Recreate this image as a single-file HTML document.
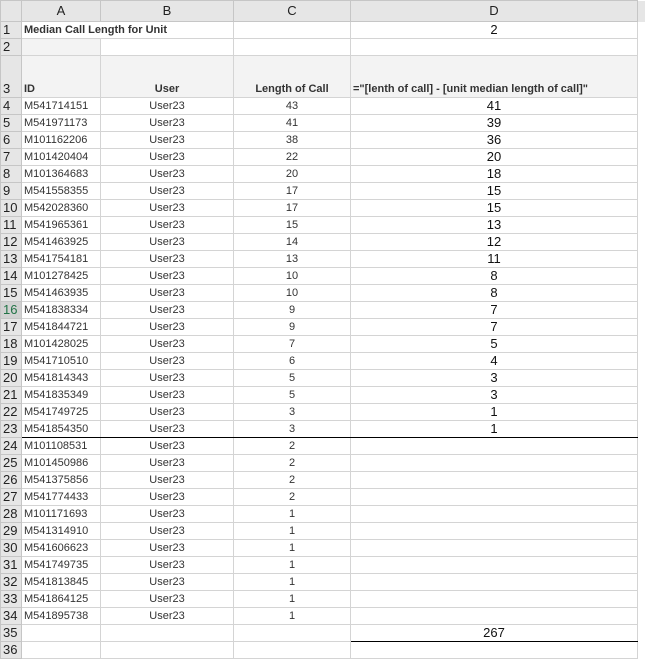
<!DOCTYPE html>
<html><head><style>
body{margin:0;background:#fff;width:645px;height:645px;overflow:hidden;font-family:"Liberation Sans",Arial,sans-serif}
table{border-collapse:collapse;table-layout:fixed;position:absolute;left:0;top:0;width:645px}
td{border:1px solid #d4d4d4;padding:0;height:16px;font-size:11px;color:#333;white-space:nowrap;overflow:visible;line-height:16px}
td.h{background:#e6e6e6;color:#222;font-size:13px;text-align:center;border-color:#c6c6c6}
td.r{background:#e6e6e6;color:#222;font-size:13px;text-align:left;padding-left:2px;border-color:#c6c6c6}
td.r.s{color:#217346;background:#d2d2d2}
.a{padding-left:2px}
.c{text-align:center}
.d{text-align:center;font-size:13px;color:#111}
.g{background:#f3f3f3}
.b{font-weight:bold;color:#333}
.ln td{border-bottom:1px solid #000}
</style></head><body>
<table>
<colgroup><col style="width:21px"><col style="width:79px"><col style="width:133px"><col style="width:117px"><col style="width:287px"><col style="width:8px"></colgroup>
<tr style="height:21px"><td class="h" style="height:20px"></td><td class="h">A</td><td class="h">B</td><td class="h">C</td><td class="h">D</td><td class="h" style="border:none;background:#e6e6e6"></td></tr>
<tr><td class="r">1</td><td class="a b" style="border-right:none">Median Call Length for Unit</td><td style="border-left:none"></td><td></td><td class="d">2</td><td style="border:none"></td></tr>
<tr><td class="r">2</td><td class="g"></td><td></td><td></td><td></td><td style="border:none"></td></tr>
<tr><td class="r" style="height:41px;vertical-align:bottom">3</td><td class="g a b" style="vertical-align:bottom">ID</td><td class="g c b" style="vertical-align:bottom">User</td><td class="g c b" style="vertical-align:bottom">Length of Call</td><td class="g b" style="vertical-align:bottom;padding-left:2px">="[lenth of call] - [unit median length of call]"</td><td style="border:none"></td></tr>
<tr><td class="r">4</td><td class="a">M541714151</td><td class="c">User23</td><td class="c">43</td><td class="d">41</td><td style="border:none"></td></tr>
<tr><td class="r">5</td><td class="a">M541971173</td><td class="c">User23</td><td class="c">41</td><td class="d">39</td><td style="border:none"></td></tr>
<tr><td class="r">6</td><td class="a">M101162206</td><td class="c">User23</td><td class="c">38</td><td class="d">36</td><td style="border:none"></td></tr>
<tr><td class="r">7</td><td class="a">M101420404</td><td class="c">User23</td><td class="c">22</td><td class="d">20</td><td style="border:none"></td></tr>
<tr><td class="r">8</td><td class="a">M101364683</td><td class="c">User23</td><td class="c">20</td><td class="d">18</td><td style="border:none"></td></tr>
<tr><td class="r">9</td><td class="a">M541558355</td><td class="c">User23</td><td class="c">17</td><td class="d">15</td><td style="border:none"></td></tr>
<tr><td class="r">10</td><td class="a">M542028360</td><td class="c">User23</td><td class="c">17</td><td class="d">15</td><td style="border:none"></td></tr>
<tr><td class="r">11</td><td class="a">M541965361</td><td class="c">User23</td><td class="c">15</td><td class="d">13</td><td style="border:none"></td></tr>
<tr><td class="r">12</td><td class="a">M541463925</td><td class="c">User23</td><td class="c">14</td><td class="d">12</td><td style="border:none"></td></tr>
<tr><td class="r">13</td><td class="a">M541754181</td><td class="c">User23</td><td class="c">13</td><td class="d">11</td><td style="border:none"></td></tr>
<tr><td class="r">14</td><td class="a">M101278425</td><td class="c">User23</td><td class="c">10</td><td class="d">8</td><td style="border:none"></td></tr>
<tr><td class="r">15</td><td class="a">M541463935</td><td class="c">User23</td><td class="c">10</td><td class="d">8</td><td style="border:none"></td></tr>
<tr><td class="r s">16</td><td class="a">M541838334</td><td class="c">User23</td><td class="c">9</td><td class="d">7</td><td style="border:none"></td></tr>
<tr><td class="r">17</td><td class="a">M541844721</td><td class="c">User23</td><td class="c">9</td><td class="d">7</td><td style="border:none"></td></tr>
<tr><td class="r">18</td><td class="a">M101428025</td><td class="c">User23</td><td class="c">7</td><td class="d">5</td><td style="border:none"></td></tr>
<tr><td class="r">19</td><td class="a">M541710510</td><td class="c">User23</td><td class="c">6</td><td class="d">4</td><td style="border:none"></td></tr>
<tr><td class="r">20</td><td class="a">M541814343</td><td class="c">User23</td><td class="c">5</td><td class="d">3</td><td style="border:none"></td></tr>
<tr><td class="r">21</td><td class="a">M541835349</td><td class="c">User23</td><td class="c">5</td><td class="d">3</td><td style="border:none"></td></tr>
<tr><td class="r">22</td><td class="a">M541749725</td><td class="c">User23</td><td class="c">3</td><td class="d">1</td><td style="border:none"></td></tr>
<tr class="ln"><td class="r" style="border-bottom-color:#c6c6c6">23</td><td class="a">M541854350</td><td class="c">User23</td><td class="c">3</td><td class="d">1</td><td style="border:none"></td></tr>
<tr><td class="r">24</td><td class="a">M101108531</td><td class="c">User23</td><td class="c">2</td><td></td><td style="border:none"></td></tr>
<tr><td class="r">25</td><td class="a">M101450986</td><td class="c">User23</td><td class="c">2</td><td></td><td style="border:none"></td></tr>
<tr><td class="r">26</td><td class="a">M541375856</td><td class="c">User23</td><td class="c">2</td><td></td><td style="border:none"></td></tr>
<tr><td class="r">27</td><td class="a">M541774433</td><td class="c">User23</td><td class="c">2</td><td></td><td style="border:none"></td></tr>
<tr><td class="r">28</td><td class="a">M101171693</td><td class="c">User23</td><td class="c">1</td><td></td><td style="border:none"></td></tr>
<tr><td class="r">29</td><td class="a">M541314910</td><td class="c">User23</td><td class="c">1</td><td></td><td style="border:none"></td></tr>
<tr><td class="r">30</td><td class="a">M541606623</td><td class="c">User23</td><td class="c">1</td><td></td><td style="border:none"></td></tr>
<tr><td class="r">31</td><td class="a">M541749735</td><td class="c">User23</td><td class="c">1</td><td></td><td style="border:none"></td></tr>
<tr><td class="r">32</td><td class="a">M541813845</td><td class="c">User23</td><td class="c">1</td><td></td><td style="border:none"></td></tr>
<tr><td class="r">33</td><td class="a">M541864125</td><td class="c">User23</td><td class="c">1</td><td></td><td style="border:none"></td></tr>
<tr><td class="r">34</td><td class="a">M541895738</td><td class="c">User23</td><td class="c">1</td><td></td><td style="border:none"></td></tr>
<tr><td class="r">35</td><td></td><td></td><td></td><td class="d" style="border-bottom:1px solid #000">267</td><td style="border:none"></td></tr>
<tr><td class="r">36</td><td></td><td></td><td></td><td></td><td style="border:none"></td></tr>
</table>
</body></html>
